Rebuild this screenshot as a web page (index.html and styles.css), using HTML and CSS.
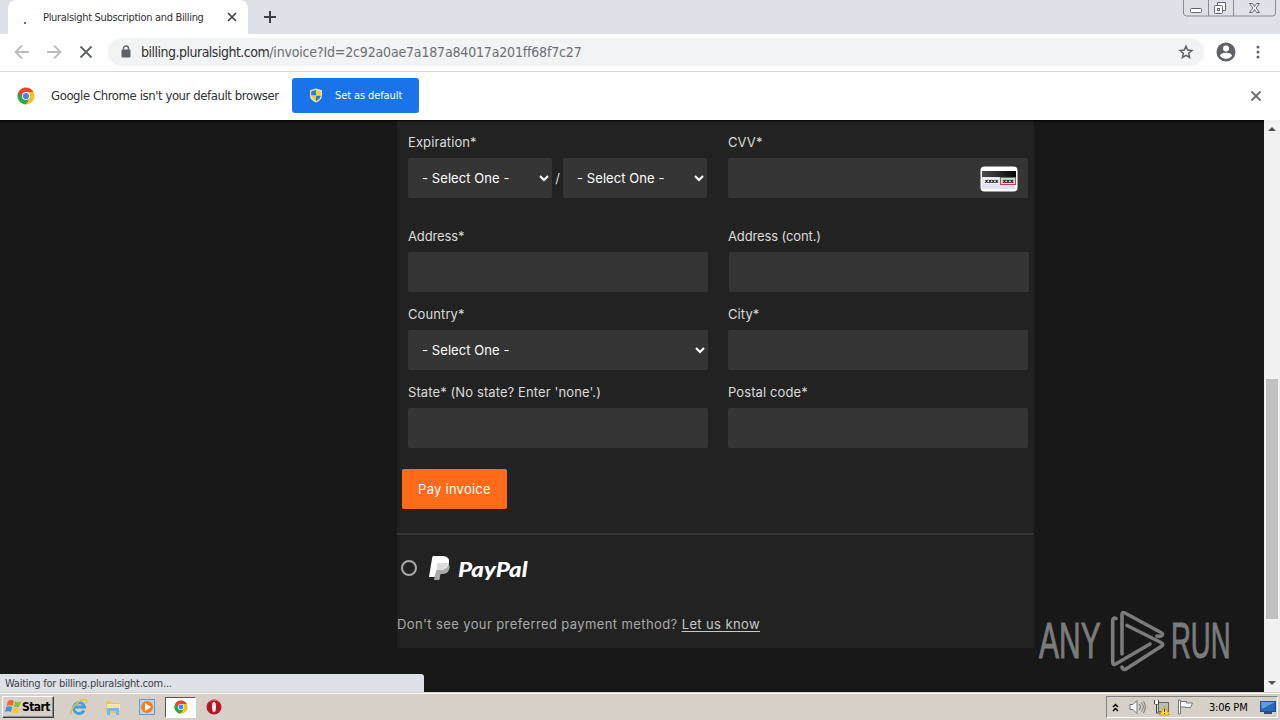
FILE: index.html
```html
<!DOCTYPE html>
<html lang="en">
<head>
  <meta charset="UTF-8">
  <title>Pluralsight Subscription and Billing</title>
  <link rel="stylesheet" href="styles.css">
</head>
<body>
  <div class="tab-strip">
    <div class="tab">
      <span class="spinner"></span>
      <span class="tab-title">Pluralsight Subscription and Billing</span>
      <svg class="tab-close" width="10" height="10" viewBox="0 0 10 10"><path d="M1 1l8 8M9 1L1 9" stroke="#3c4043" stroke-width="1.600"/></svg>
    </div>
    <svg class="new-tab" width="12" height="12" viewBox="0 0 12 12"><path d="M6 0v12M0 6h12" stroke="#3c4043" stroke-width="2"/></svg>
    <svg class="window-buttons" width="94" height="17" viewBox="0 0 94 17" fill="none" stroke="#858b98">
      <path d="M.5 0v13q0 3 3 3h86q3 0 3-3V0M25.500 0v16M50.500 0v16"/>
      <g stroke="#60656f">
        <rect x="7.500" y="8.500" width="11" height="4" rx="1" fill="#fff"/>
        <path d="M34.500 5V2.500h8v8H40" fill="#fff"/>
        <rect x="31.500" y="5.500" width="8" height="8" rx="1" fill="#fff"/>
        <rect x="34.500" y="8.500" width="2" height="2"/>
        <path d="M66.500 3.500h3l2 3 2-3h3l-3.500 4.500 3.500 4.500h-3l-2-3-2 3h-3L70 8z" fill="#fff"/>
      </g>
    </svg>
  </div>

  <div class="toolbar">
    <svg class="nav" width="16" height="16" viewBox="0 0 16 16"><path d="M15 8H2M8 1.500L1.500 8 8 14.500" fill="none" stroke="#babcbe" stroke-width="1.800"/></svg>
    <svg class="nav" width="16" height="16" viewBox="0 0 16 16"><path d="M1 8h13M8 1.500L14.500 8 8 14.500" fill="none" stroke="#babcbe" stroke-width="1.800"/></svg>
    <svg class="nav" width="16" height="16" viewBox="0 0 16 16"><path d="M2.500 2.500l11 11M13.500 2.500l-11 11" stroke="#5f6368" stroke-width="1.900"/></svg>
    <div class="omnibox">
      <svg class="lock" width="10" height="13" viewBox="0 0 10 13"><rect x=".5" y="4.500" width="9" height="8" rx="1" fill="#5f6368"/><path d="M2.500 5V3.500a2.500 2.500 0 0 1 5 0V5" fill="none" stroke="#5f6368" stroke-width="1.400"/></svg>
      <span class="url"><span class="host">billing.pluralsight.com</span><span class="path">/invoice?Id=2c92a0ae7a187a84017a201ff68f7c27</span></span>
      <svg class="star" width="16" height="16" viewBox="0 0 16 16"><path d="M8 2.200l1.700 3.900 4.200.4-3.200 2.800.9 4.200L8 11.300l-3.600 2.200.9-4.200-3.200-2.800 4.200-.4z" fill="none" stroke="#5f6368" stroke-width="1.500"/></svg>
    </div>
    <svg class="avatar" width="20" height="20" viewBox="0 0 20 20"><circle cx="10" cy="10" r="9.500" fill="#5f6368"/><circle cx="10" cy="6.500" r="3" fill="#fff"/><path d="M4 14q0-3 6-3.300 6 .3 6 3.300-2.500 3-6 3t-6-3z" fill="#fff"/></svg>
    <svg class="menu" width="4" height="14" viewBox="0 0 4 14" fill="#5f6368"><circle cx="2" cy="2" r="1.500"/><circle cx="2" cy="7" r="1.500"/><circle cx="2" cy="12" r="1.500"/></svg>
  </div>

  <div class="infobar">
    <svg class="chrome-logo" width="18" height="18" viewBox="0 0 18 18">
      <circle cx="9" cy="9" r="8.500" fill="#fbc116"/>
      <path d="M9 9L1.640 4.750A8.500 8.500 0 0 0 9 17.500L12.700 11z" fill="#2da94f"/>
      <path d="M9 9L5.300 11 1.640 4.750A8.500 8.500 0 0 1 16.360 5H9z" fill="#ea4335"/>
      <circle cx="9" cy="9" r="4" fill="#fff"/><circle cx="9" cy="9" r="3.100" fill="#4285f4"/>
    </svg>
    <span class="info-text">Google Chrome isn't your default browser</span>
    <button class="set-default">
      <svg width="14" height="15" viewBox="0 0 14 15"><path d="M7 .5l6 1.700v5q0 5-6 7.300Q1 12.200 1 7.200v-5z" fill="#e8e4c4"/><path d="M7 2v5.500H2.200V3.200zM7 7.500h4.800Q11.300 11 7 13.200z" fill="#2f78cf"/><path d="M7 2l4.800 1.200v4.300H7zM7 7.500v5.700Q2.700 11 2.200 7.500z" fill="#f3cf2e"/></svg>
      <span>Set as default</span>
    </button>
    <svg class="info-close" width="10" height="10" viewBox="0 0 10 10"><path d="M.5.5l9 9M9.500.5l-9 9" stroke="#5f6368" stroke-width="1.800"/></svg>
  </div>

  <div class="viewport">
    <div class="page">
      <div class="panel">
        <form class="billing-form">
          <div class="field first">
            <label>Expiration*</label>
            <div class="expiration">
              <div class="select"><span>- Select One -</span><svg width="10" height="7" viewBox="0 0 10 7"><path d="M1 1l4 4 4-4" /></svg></div>
              <span class="slash">/</span>
              <div class="select"><span>- Select One -</span><svg width="10" height="7" viewBox="0 0 10 7"><path d="M1 1l4 4 4-4" /></svg></div>
            </div>
          </div>
          <div class="field first">
            <label class="cvv-label">CVV*</label>
            <div class="input cvv">
              <svg width="38" height="26" viewBox="0 0 38 26">
                <defs><linearGradient id="stripe"><stop offset="0" stop-color="#4c4c4c"/><stop offset="1" stop-color="#050505"/></linearGradient></defs>
                <rect x=".5" y=".5" width="37" height="25" rx="4" fill="#fff"/>
                <rect x="2" y="11" width="33" height="12" fill="#e3e3f4"/>
                <rect x="2" y="5" width="34" height="6" fill="url(#stripe)"/>
                <rect x="4" y="12" width="15" height="6" fill="#fff"/>
                <rect x="20.500" y="11.500" width="15" height="7" fill="#ecccd5" stroke="#d53b52"/>
                <text class="card-digits" x="4.500" y="17.200" textLength="14">xxxx</text>
                <text class="card-digits" x="22.500" y="17.200" textLength="11">xxx</text>
              </svg>
            </div>
          </div>
          <div class="field"><label class="address-label">Address*</label><div class="input"></div></div>
          <div class="field"><label class="address-label">Address (cont.)</label><div class="input cont"></div></div>
          <div class="field">
            <label>Country*</label>
            <div class="select"><span>- Select One -</span><svg width="10" height="7" viewBox="0 0 10 7"><path d="M1 1l4 4 4-4" /></svg></div>
          </div>
          <div class="field"><label>City*</label><div class="input"></div></div>
          <div class="field"><label>State* (No state? Enter 'none'.)</label><div class="input"></div></div>
          <div class="field"><label>Postal code*</label><div class="input"></div></div>
        </form>
        <button class="pay">Pay invoice</button>
        <div class="paypal-row">
          <span class="radio"></span>
          <svg class="paypal-mark" width="22" height="25" viewBox="0 0 22 25">
            <path d="M8 7h10q4 2 2 7-1.500 4-7 4h-1.500L10.400 24H5z" fill="#aaa"/>
            <path d="M4.500 0h10q6.500.5 5.500 7-1.500 7-9 7H7.500L5.500 21H0L3.300 1q.2-1 1.200-1z" fill="#fff"/>
            <path d="M8.500 7H18q1 .3 1.500 1-2 6-8.500 6H7.500z" fill="#ddd"/>
          </svg>
          <span class="paypal-name">PayPal</span>
        </div>
        <p class="help">Don't see your preferred payment method? <a href="#">Let us know</a></p>
      </div>
    </div>
    <div class="scrollbar">
      <span class="arrow up"></span>
      <span class="thumb"></span>
      <span class="arrow down"></span>
    </div>
    <div class="status">Waiting for billing.pluralsight.com...</div>
    <div class="watermark">
      <span class="any">ANY</span>
      <svg width="56" height="62" viewBox="0 0 56 62" fill="none" stroke="#7b7b7b" stroke-width="3.600" stroke-linecap="round" stroke-linejoin="round">
        <path d="M6 8.500Q2.700 7 2.700 11v41q0 3.500 3 2L40 34"/>
        <path d="M12 44V5q0-3.500 3-2l36 19.500q2.500 1.500 1 3-1.500 1.500-5 .5"/>
        <path d="M17 15.500l34 17q3.500 1.800 0 4L16 59q-3.500 1.500-4-2"/>
      </svg>
      <span class="run">RUN</span>
    </div>
  </div>

  <div class="taskbar">
    <button class="start">
      <svg width="17" height="16" viewBox="0 0 17 16"><path d="M3 2q3-2 6 0L7.500 7q-3-1.500-6 0z" fill="#ee6532"/><path d="M10 2.500q3 1.500 6 0L14.500 7.500q-3 1.500-6 0z" fill="#8abd42"/><path d="M1.300 8q3-1.500 6 0L6 13q-3-1.500-6 0z" fill="#4395d8"/><path d="M8.200 8.500q3 1.500 6 0L13 13.500q-3 1.500-6 0z" fill="#f6c72e"/></svg>
      <span>Start</span>
    </button>
    <svg class="app ie" width="18" height="18" viewBox="0 0 18 18"><path d="M14 12.500A5.500 5.500 0 1 1 14.500 9H5" fill="none" stroke="#3fa2df" stroke-width="2.800"/><path d="M2 15Q-1 17 2 11 7 3 14 1.500q4-.5 2 4" fill="none" stroke="#e9bd42" stroke-width="1.500"/></svg>
    <svg class="app folder" width="18" height="18" viewBox="0 0 18 18"><path d="M2 3h5l1 2h7v10H2z" fill="#e8c65b"/><path d="M3 6h13v6H3z" fill="#f8e8a0"/><path d="M3 10h12v7h-3v-4H6v4H3z" fill="#76b9e5"/></svg>
    <svg class="app player" width="18" height="18" viewBox="0 0 18 18"><rect x="1.500" y="1.500" width="15" height="15" fill="#b9d8ef" stroke="#659bc8"/><circle cx="9" cy="9" r="6" fill="#f08020"/><path d="M7 5l6 4-6 4z" fill="#fff"/></svg>
    <div class="active-app">
      <svg width="14" height="14" viewBox="0 0 18 18">
        <circle cx="9" cy="9" r="8.500" fill="#fbc116"/>
        <path d="M9 9L1.640 4.750A8.500 8.500 0 0 0 9 17.500L12.700 11z" fill="#2da94f"/>
        <path d="M9 9L5.300 11 1.640 4.750A8.500 8.500 0 0 1 16.360 5H9z" fill="#ea4335"/>
        <circle cx="9" cy="9" r="4" fill="#fff"/><circle cx="9" cy="9" r="3.100" fill="#4285f4"/>
      </svg>
    </div>
    <svg class="app opera" width="16" height="16" viewBox="0 0 16 16"><circle cx="8" cy="8" r="7.500" fill="#b51620"/><path d="M3 3q5-4 10 0" stroke="#e46a6b" fill="none"/><ellipse cx="8" cy="8" rx="2" ry="5.200" fill="#eee"/></svg>
    <div class="tray">
      <svg class="chevrons" width="7" height="9" viewBox="0 0 7 9"><path d="M1 4l2.500-2.500L6 4M1 8l2.500-2.500L6 8" fill="none" stroke="#000" stroke-width="1.500"/></svg>
      <svg class="speaker" width="17" height="16" viewBox="0 0 17 16" fill="none" stroke="#777"><path d="M1 5.500h3l4-4v13l-4-4H1z" fill="#fff"/><path d="M10.500 5q2 3 0 6M12.500 3.500q3.500 4.500 0 9M14.500 2q3.500 6 0 12"/></svg>
      <svg class="network" width="17" height="17" viewBox="0 0 17 17"><rect x="5.500" y="3.500" width="10" height="9" fill="#bbb" stroke="#666"/><path d="M1.500 1v4h4V1M3.500 5v9h5" fill="none" stroke="#444"/><path d="M2 1.500h3V5H2z" fill="#fff"/><path d="M11.500 7l5 9h-10z" fill="#ffde20" stroke="#b89617" stroke-width=".7"/><path d="M11.500 9.500v3.500M11.500 14v1" stroke="#333"/></svg>
      <svg class="flag" width="17" height="16" viewBox="0 0 17 16"><path d="M1.500 1v14h2V1z" fill="#fff" stroke="#777"/><path d="M3.500 2.500h6v1.500h6l-2 4.500H8.500V8h-5z" fill="#fff" stroke="#777"/></svg>
      <span class="clock">3:06 PM</span>
      <svg class="desktop" width="16" height="14" viewBox="0 0 16 14"><rect x=".5" y="1.500" width="15" height="10" fill="#2469bd" stroke="#234f91"/><path d="M1 2h14L2 9z" fill="#5ca0e1"/><path d="M4 13h8" stroke="#334e79" stroke-width="2"/></svg>
    </div>
  </div>
</body>
</html>
```
FILE: styles.css
```css
* {
  box-sizing: border-box;
}

body {
  margin: 0;
  width: 1280px;
  height: 720px;
  overflow: hidden;
  display: flex;
  flex-direction: column;
  font-family: "DejaVu Sans Condensed", "Noto Sans", sans-serif;
  font-size: 11px;
  color: #303134;
  white-space: nowrap;
}

svg {
  display: block;
  flex: none;
}

button {
  border: none;
  font-family: inherit;
}

.tab-strip {
  height: 34px;
  background: #dee1e8;
  display: flex;
  align-items: center;
}

.tab {
  width: 240px;
  height: 34px;
  margin-left: 8px;
  padding: 0 11px 0 16px;
  background: #fff;
  border-radius: 8px 8px 0 0;
  display: flex;
  align-items: center;
}

.spinner {
  width: 2px;
  height: 2px;
  margin: 12px 17px 0 0;
  background: #3474d8;
}

.tab-title {
  letter-spacing: -0.32px;
}

.tab-close {
  margin-left: auto;
}

.new-tab {
  margin-left: 16px;
}

.window-buttons {
  margin: 0 3px 0 auto;
  align-self: flex-start;
}

.toolbar {
  height: 38px;
  background: #fff;
  border-bottom: 1px solid #d5d7da;
  display: flex;
  align-items: center;
  padding: 0 20px 2px 14px;
}

.nav {
  margin-right: 16px;
}

.omnibox {
  width: 1096px;
  height: 28px;
  margin-left: -2px;
  padding: 0 10px 0 13px;
  background: #f1f3f4;
  border-radius: 14px;
  display: flex;
  align-items: center;
}

.url {
  margin-left: 10px;
  font-size: 14px;
}

.host {
  letter-spacing: -0.5px;
}

.path {
  color: #6b6f73;
  letter-spacing: -0.17px;
}

.star {
  margin-left: auto;
}

.avatar {
  margin-left: 12px;
}

.menu {
  margin-left: auto;
}

.infobar {
  height: 48px;
  background: #fff;
  display: flex;
  align-items: center;
  padding: 0 19px 1px 17px;
}

.info-text {
  width: 229px;
  margin: 0 12px 0 16px;
  font-size: 13px;
  letter-spacing: -0.42px;
}

.set-default {
  width: 127px;
  height: 35px;
  margin-bottom: 1px;
  padding: 0 17px;
  background: #1a73e8;
  border-radius: 3px;
  color: #fff;
  font-size: 11px;
  letter-spacing: -0.1px;
  display: flex;
  align-items: center;
  gap: 12px;
}

.info-close {
  margin-left: auto;
}

.viewport {
  position: relative;
  height: 572px;
  display: flex;
  background: #181818;
}

.page {
  width: 1264px;
  padding-left: 397px;
  box-shadow: inset 0 3px 3px -2px #000;
}

.panel {
  width: 637px;
  height: 528px;
  background: #222;
  font-family: Inter, sans-serif;
  font-size: 13px;
  color: #dcdcdc;
  box-shadow: inset 0 3px 3px -2px #000;
}

.billing-form {
  display: grid;
  grid-template-columns: 300px 300px;
  column-gap: 20px;
  padding: 10px 0 0 11px;
}

.field {
  height: 78px;
}

.first {
  height: 94px;
}

.field label {
  display: block;
  height: 28px;
  line-height: 24px;
  letter-spacing: 0.1px;
}

.field .address-label {
  letter-spacing: -0.12px;
}

.input,
.select {
  height: 40px;
  background: #353535;
  border-radius: 2px;
}

.select {
  display: flex;
  align-items: center;
  justify-content: space-between;
  padding: 0 3px 0 14px;
  color: #fff;
  letter-spacing: 0.08px;
}

.select path {
  fill: none;
  stroke: #fff;
  stroke-width: 2;
}

.expiration {
  width: 299px;
  display: flex;
  align-items: center;
}

.expiration .select {
  width: 144px;
}

.slash {
  width: 11px;
  text-align: center;
}

.cvv {
  display: flex;
  align-items: center;
  justify-content: flex-end;
  padding: 1px 10px 0 0;
}

.card-digits {
  font: bold 6px "DejaVu Sans", sans-serif;
}

.cont {
  width: 301px;
  border-left: 1px solid #222;
}

.pay {
  display: block;
  width: 105px;
  height: 40px;
  margin: 11px 0 24px 5px;
  padding: 0;
  border-radius: 2px;
  background: #ff6b18;
  color: #fff;
  font-size: 13px;
  letter-spacing: 0.25px;
}

.paypal-row {
  height: 68px;
  border-top: 2px solid #353535;
  padding-left: 4px;
  display: flex;
  align-items: center;
}

.radio {
  width: 16px;
  height: 16px;
  border: 2px solid #aaa;
  border-radius: 50%;
}

.paypal-mark {
  margin-left: 12px;
}

.paypal-name {
  margin: 1px 0 0 7px;
  font: italic 900 20px Lato, sans-serif;
  color: #fff;
  transform: scaleX(1.2);
  transform-origin: 0 50%;
}

.help {
  margin: 13px 0 0;
  line-height: 20px;
  color: #aaa;
  letter-spacing: 0.39px;
}

.help a {
  color: #c8c8c8;
  text-underline-offset: 2px;
}

.scrollbar {
  width: 16px;
  background: #f1f1f1;
  display: flex;
  flex-direction: column;
  align-items: center;
}

.arrow {
  border: 4px solid transparent;
}

.up {
  border-top: none;
  border-bottom-color: #505050;
  margin-top: 7px;
}

.thumb {
  width: 12px;
  height: 240px;
  margin-top: 248px;
  background: #c1c1c1;
}

.down {
  border-bottom: none;
  border-top-color: #505050;
  margin-top: 62px;
}

.status {
  position: absolute;
  left: 0;
  bottom: 0;
  width: 424px;
  height: 18px;
  padding-left: 5px;
  line-height: 19px;
  background: #dee1e8;
  border-radius: 0 3px 0 0;
  color: #3c4043;
  letter-spacing: -0.25px;
}

/* logo laid over the page */
.watermark {
  position: absolute;
  left: 1039px;
  top: 490px;
  display: flex;
  align-items: center;
  color: #7b7b7b;
  -webkit-text-stroke: 1px #7b7b7b;
  font: 50px/62px "Liberation Sans", sans-serif;
}

.any,
.run {
  width: 64px;
  transform: scaleX(0.6);
  transform-origin: 0 50%;
}

.run {
  transform: scaleX(0.55);
}

.watermark svg {
  margin: 0 5px 0 7px;
}

.taskbar {
  height: 28px;
  background: #d6d0c8;
  border-top: 1px solid #d6d0c8;
  box-shadow: inset 0 1px #fff;
  display: flex;
  align-items: center;
  padding: 1px 2px 0 2px;
}

.start {
  width: 52px;
  height: 22px;
  padding: 0 2px;
  background: #d6d0c8;
  border: 1px solid;
  border-color: #fff #404040 #404040 #fff;
  box-shadow: inset -1px -1px #888;
  display: flex;
  align-items: center;
  font-size: 12px;
  font-weight: bold;
  letter-spacing: -0.6px;
}

.ie {
  margin-left: 16px;
}

.folder {
  margin-left: 16px;
}

.player {
  margin-left: 16px;
}

.active-app {
  width: 31px;
  height: 21px;
  margin: 0 10px 0 9px;
  background: #fff;
  border: 1px solid;
  border-color: #555 #fff #fff #555;
  display: flex;
  align-items: center;
  justify-content: center;
}

.tray {
  width: 172px;
  height: 22px;
  margin-left: auto;
  border: 1px solid;
  border-color: #808080 #fff #fff #808080;
  display: flex;
  align-items: center;
  padding-left: 5px;
  color: #000;
}

.speaker {
  margin-left: 10px;
}

.network {
  margin-left: 7px;
}

.flag {
  margin-left: 7px;
}

.clock {
  width: 41px;
  margin: 0 10px 0 15px;
  letter-spacing: -0.2px;
}
```
